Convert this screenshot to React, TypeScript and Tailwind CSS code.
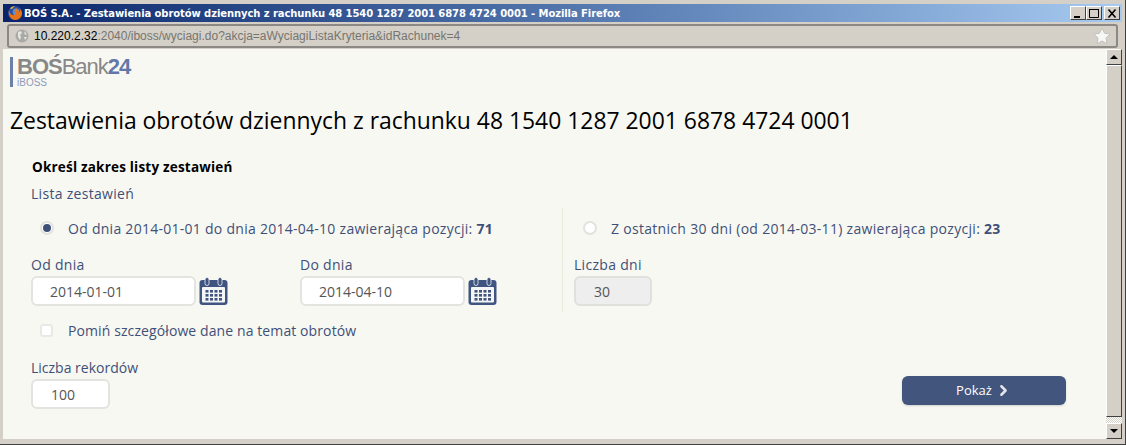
import { ChevronRight } from 'lucide-react'

function FirefoxIcon() {
  return (
    <svg width="16" height="16" viewBox="0 0 16 16" className="shrink-0">
      <circle cx="8" cy="8" r="7" fill="#2a4f9e" />
      <circle cx="9" cy="7" r="3.4" fill="#5b8fd6" />
      <path d="M2 5C1 9 3 15 8.5 15c3.5 0 6.5-3 6.5-6.5 0-2-1-4-2.5-5 .7 1.6.5 3-.3 4-.3-2-1.800-3.500-3.700-4.500.5 1.500-.5 2.500-1.500 3 .8.300 1.500 1 1.500 2 0 1.500-1.500 2.500-3 2C3.500 9.500 2.500 7.500 2 5z" fill="#e8741a" />
      <path d="M8 1C6 1 4 2 3 3.500L5 4c1-1.500 2-2.300 3-3z" fill="#f5b83d" />
    </svg>
  )
}

function WinButton({ kind }: { kind: 'min' | 'max' | 'close' }) {
  return (
    <div className="flex h-[14px] w-[16px] items-center justify-center border border-t-white border-l-white border-r-[#404040] border-b-[#404040] bg-[#d4d0c8]">
      <svg width="12" height="11" viewBox="0 0 12 11">
        {kind === 'min' && <rect x="2" y="8" width="6" height="2" fill="#000" />}
        {kind === 'max' && <path d="M1.500 1.500h9v8h-9zM1 1.500h10" fill="none" stroke="#000" strokeWidth="1" />}
        {kind === 'close' && <path d="M2.500 1.500l7 8M9.500 1.500l-7 8" stroke="#000" strokeWidth="1.600" />}
      </svg>
    </div>
  )
}

function CalendarIcon() {
  return (
    <svg width="29" height="28" viewBox="0 0 29 28" className="shrink-0">
      <rect x="0.500" y="3" width="28" height="25" rx="3" fill="#3f5480" />
      <rect x="3" y="10" width="23" height="15.500" rx="1" fill="#f4f5f4" />
      <rect x="6" y="0.500" width="4" height="8" rx="2" fill="#3f5480" stroke="#f4f5f4" strokeWidth="0.800" />
      <rect x="19" y="0.500" width="4" height="8" rx="2" fill="#3f5480" stroke="#f4f5f4" strokeWidth="0.800" />
      {[13, 17, 21].map((y) =>
        [6.500, 11, 15.500, 20].map((x) => (
          <rect key={`${x}-${y}`} x={x} y={y} width="3" height="2.600" fill="#3f5480" />
        )),
      )}
    </svg>
  )
}

function Radio({ checked }: { checked?: boolean }) {
  return (
    <div className="flex h-[14px] w-[14px] shrink-0 items-center justify-center rounded-full border-2 border-[#e2e2de] bg-white">
      {checked && <div className="h-[8px] w-[8px] rounded-full bg-[#3f5078]" />}
    </div>
  )
}

function DateField({ label, value }: { label: string; value: string }) {
  return (
    <div className="w-[269px] shrink-0">
      <div className="h-[22px] text-[14px] leading-[22px] tracking-[0.3px]">{label}</div>
      <div className="flex items-center gap-[3px]">
        <div className="flex h-[30px] w-[165px] items-center rounded-[6px] border-2 border-[#e3e3df] bg-white pl-[17px] text-[14px] text-[#555]">
          {value}
        </div>
        <CalendarIcon />
      </div>
    </div>
  )
}

export default function App() {
  return (
    <div className="flex h-[445px] w-[1126px] flex-col overflow-hidden bg-[#d4d0c8] pt-[4px] pr-[3px] pb-[2px] pl-[3px] font-['Open_Sans',sans-serif] border-r border-b border-r-[#404040] border-b-[#404040]">
      {/* title bar */}
      <div className="flex h-[18px] shrink-0 items-center justify-between bg-gradient-to-r from-[#0a246a] to-[#a6caf0] pr-[2px] pl-[4px]">
        <div className="flex items-center gap-[1px] font-['DejaVu_Sans',sans-serif] text-[10px] tracking-[-0.08px] font-bold text-white whitespace-nowrap">
          <FirefoxIcon />
          <span>BOŚ S.A. - Zestawienia obrotów dziennych z rachunku 48 1540 1287 2001 6878 4724 0001 - Mozilla Firefox</span>
        </div>
        <div className="flex items-center">
          <WinButton kind="min" />
          <WinButton kind="max" />
          <div className="w-[2px]" />
          <WinButton kind="close" />
        </div>
      </div>

      {/* url bar */}
      <div className="flex h-[27px] shrink-0 items-center px-[4px]">
        <div className="flex h-[24px] w-full items-center rounded-[3px] border-2 border-[#8c8984] bg-[#d4d0c8] pr-[5px] pl-[5px]">
          <svg width="16" height="16" viewBox="0 0 16 16" className="shrink-0">
            <circle cx="8" cy="8" r="6.500" fill="#a9a9a6" />
            <path d="M4 4l3-1 1 2-2 2 1 2-1 3-2-3zM10 3l3 3-2 1zM10 9l3 0-2 3z" fill="#e4e4e0" />
          </svg>
          <span className="ml-[4px] flex-1 font-['Liberation_Sans',sans-serif] text-[12px] text-[#77756f] whitespace-nowrap">
            <span className="text-black">10.220.2.32</span>:2040/iboss/wyciagi.do?akcja=aWyciagiListaKryteria&amp;idRachunek=4
          </span>
          <svg width="18" height="18" viewBox="0 0 18 18" className="shrink-0">
            <path d="M9 1l2.500 5.200 5.500.8-4 4 1 5.700L9 14l-5 2.700 1-5.700-4-4 5.500-.8z" fill="#f6f6f5" stroke="#c4c2bc" strokeWidth="1" />
          </svg>
        </div>
      </div>

      {/* page */}
      <div className="flex min-h-0 flex-1 border-b-[3px] border-b-[#d4d0c8]">
        <div className="min-w-0 flex-1 bg-[#f8f8f2] pt-[8px] text-[#3f5078]">
          {/* logo */}
          <div className="flex h-[30px] pl-[7px]">
            <div className="h-[30px] w-[3px] bg-[#6b7fa9]" />
            <div className="ml-[4px] font-['Liberation_Sans',sans-serif] leading-none">
              <div className="h-[19px] text-[22px] leading-[20px] tracking-[-1px] whitespace-nowrap text-[#888]">
                <span className="font-bold">BOŚ</span>
                <span>Bank</span>
                <span className="font-bold text-[#6178a8]">24</span>
              </div>
              <div className="mt-[2px] text-[10px] leading-[9px] text-[#8c9bbd]">iBOSS</div>
            </div>
          </div>

          <h1 className="mt-[19px] pl-[7px] text-[22.900px] leading-[30px] font-normal whitespace-nowrap text-black">
            Zestawienia obrotów dziennych z rachunku 48 1540 1287 2001 6878 4724 0001
          </h1>

          <div className="mt-[22px] pl-[29px] text-[13.500px] tracking-[0.2px] leading-[18px] font-bold text-black">
            Określ zakres listy zestawień
          </div>
          <div className="mt-[9px] pl-[28px] text-[14px] tracking-[0.3px] leading-[18px]">Lista zestawień</div>

          <div className="mt-[5px] flex">
            <div className="w-[559px] shrink-0 pl-[28px]">
              <div className="flex h-[40px] items-center pl-[9px] text-[14px] tracking-[0.27px] font-medium whitespace-nowrap">
                <Radio checked />
                <span className="ml-[14px]">
                  Od dnia 2014-01-01 do dnia 2014-04-10 zawierająca pozycji: <b>71</b>
                </span>
              </div>
              <div className="mt-[6px] flex">
                <DateField label="Od dnia" value="2014-01-01" />
                <DateField label="Do dnia" value="2014-04-10" />
              </div>
            </div>
            <div className="h-[104px] w-px bg-[#e8e8dc]" />
            <div className="pl-[11px]">
              <div className="flex h-[40px] items-center pl-[9px] text-[14px] tracking-[0.3px] font-medium whitespace-nowrap">
                <Radio />
                <span className="ml-[14px]">
                  Z ostatnich 30 dni (od 2014-03-11) zawierająca pozycji: <b>23</b>
                </span>
              </div>
              <div className="mt-[6px]">
                <div className="h-[22px] text-[14px] tracking-[0.3px] leading-[22px]">Liczba dni</div>
                <div className="flex h-[30px] w-[78px] items-center rounded-[6px] border-2 border-[#e0e0dc] bg-[#eeeeee] pl-[18px] text-[14px] text-[#555]">
                  30
                </div>
              </div>
            </div>
          </div>

          <div className="mt-[10px] flex h-[17px] items-center pl-[37px] text-[14px] tracking-[0.1px]">
            <div className="h-[13px] w-[13px] rounded-[3px] border-2 border-[#e8e8e4] bg-white" />
            <span className="ml-[15px]">Pomiń szczegółowe dane na temat obrotów</span>
          </div>

          <div className="mt-[20px] flex items-start justify-between pr-[40px] pl-[28px]">
            <div>
              <div className="h-[20px] text-[14px] leading-[18px]">Liczba rekordów</div>
              <div className="flex h-[30px] w-[79px] items-center rounded-[6px] border-2 border-[#e3e3df] bg-white pl-[18px] text-[14px] text-[#555]">
                100
              </div>
            </div>
            <button className="mt-[17px] flex h-[29px] w-[164px] items-center justify-center gap-[3px] rounded-[6px] bg-[#42557c] text-[13px] text-white shadow-[0_1px_2px_#d0d0d0]">
              Pokaż
              <ChevronRight size={17} strokeWidth={3.500} className="text-[#e4e6ea]" />
            </button>
          </div>
        </div>

        {/* scrollbar */}
        <div className="flex w-[16px] shrink-0 flex-col bg-[repeating-conic-gradient(#d4d0c8_0_25%,#ffffff_0_50%)] bg-[length:2px_2px]">
          <div className="flex h-[16px] items-center justify-center border border-t-white border-l-white border-r-[#404040] border-b-[#404040] bg-[#d4d0c8]">
            <div className="h-0 w-0 border-x-[4px] border-b-[4px] border-x-transparent border-b-black" />
          </div>
          <div className="h-[352px] border border-t-white border-l-white border-r-[#404040] border-b-[#404040] bg-[#d4d0c8]" />
          <div className="flex-1" />
          <div className="flex h-[16px] items-center justify-center border border-t-white border-l-white border-r-[#404040] border-b-[#404040] bg-[#d4d0c8]">
            <div className="h-0 w-0 border-x-[4px] border-t-[4px] border-x-transparent border-t-black" />
          </div>
        </div>
      </div>
    </div>
  )
}
